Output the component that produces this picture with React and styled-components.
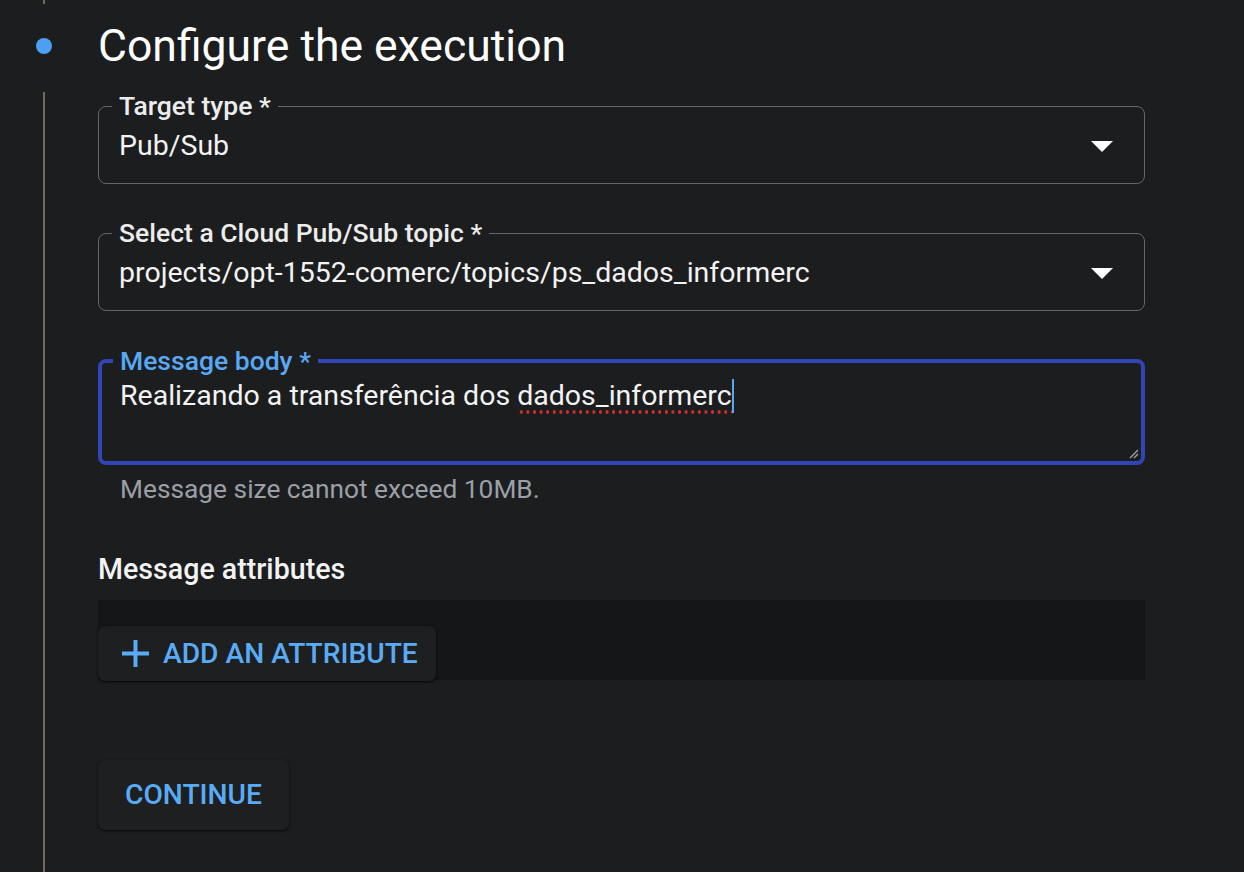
import React from "react";
import styled, { createGlobalStyle } from "styled-components";

const Global = createGlobalStyle`
  html, body { margin: 0; padding: 0; background: #1c1d1f; }
  body { font-family: Roboto, "Noto Sans", "Liberation Sans", sans-serif; color: #f1f3f4; }
  * { box-sizing: border-box; }
`;

const Step = styled.div`
  display: grid;
  grid-template-columns: 88px 1047px;
  column-gap: 10px;
  min-height: 100vh;
`;

const Rail = styled.div`
  display: flex;
  flex-direction: column;
  align-items: center;
`;

const RailLine = styled.div`
  width: 2px;
  background: #71695b;
  height: ${(p) => (p.$grow ? "auto" : p.$h + "px")};
  flex: ${(p) => (p.$grow ? "1" : "none")};
`;

const Dot = styled.div`
  width: 16px;
  height: 16px;
  border-radius: 50%;
  background: #4d9ff2;
  margin: 34px 0 38px;
`;

const Content = styled.div`
  display: flex;
  flex-direction: column;
  padding-top: 20px;
`;

const Title = styled.h2`
  margin: 0 0 19px;
  font-size: 44.5px;
  font-weight: 400;
  line-height: 52px;
  color: #ffffff;
  letter-spacing: 0;
`;

const Outlined = styled.fieldset`
  margin: 0 0 ${(p) => p.$mb || 0}px;
  padding: 0 20px 0;
  border: ${(p) => (p.$focused ? "4px solid #3144b8" : "1.5px solid #63676c")};
  border-radius: 8px;
  min-width: 0;
  position: relative;
  ${(p) => (p.$focused ? "padding-left: 18px; padding-right: 16px;" : "")}
`;

const Legend = styled.legend`
  padding: 0 7px;
  margin-left: -7px;
  font-size: 26.5px;
  font-weight: 500;
  line-height: 30px;
  color: ${(p) => (p.$focused ? "#5aa8f3" : "#ececec")};
`;

const SelectRow = styled.div`
  display: flex;
  align-items: center;
  justify-content: space-between;
  padding: 8px 0 20px;
`;

const Value = styled.span`
  font-size: 28.5px;
  line-height: 34px;
  color: #f3f3f3;
`;

const Caret = styled.svg`
  width: 22px;
  height: 11px;
  margin-right: 11px;
  flex: none;
`;

const BodyText = styled.div`
  font-size: 28.5px;
  line-height: 34px;
  color: #f3f3f3;
  height: 85px;
  padding-top: 3px;
  white-space: nowrap;
`;

const Misspelled = styled.span`
  padding-bottom: 2px;
  background: radial-gradient(circle, #d3302d 1.4px, transparent 1.8px) 1px 100% / 6.6px 3.6px repeat-x;
`;

const Cursor = styled.span`
  display: inline-block;
  width: 2px;
  height: 34px;
  background: #5aa8f3;
  vertical-align: -8px;
`;

const ResizeHandle = styled.svg`
  position: absolute;
  right: 2px;
  bottom: 2px;
  width: 12px;
  height: 12px;
`;

const Helper = styled.div`
  margin: 9px 0 0 22px;
  font-size: 26.3px;
  line-height: 30px;
  color: #9aa0a6;
`;

const SectionLabel = styled.div`
  margin-top: 48px;
  font-size: 28.6px;
  font-weight: 500;
  line-height: 34px;
  color: #f3f3f3;
`;

const AttrPanel = styled.div`
  margin-top: 14px;
  height: 80px;
  background: #151618;
  display: flex;
  align-items: flex-end;
`;

const RaisedButton = styled.button`
  display: inline-flex;
  align-items: center;
  gap: 14px;
  border: none;
  border-radius: 7px;
  background: #1e1f21;
  box-shadow: 0 1px 3px rgba(0, 0, 0, 0.55), 0 1px 1px rgba(0, 0, 0, 0.3);
  color: #5aabf6;
  font-family: Roboto, "Noto Sans", sans-serif;
  font-size: 28.2px;
  font-weight: 500;
  letter-spacing: 0;
  cursor: pointer;
  height: ${(p) => p.$h}px;
  padding: 0 ${(p) => p.$px}px 0 ${(p) => p.$pl}px;
  margin-bottom: ${(p) => p.$mb || 0}px;
`;

const ContinueWrap = styled.div`
  margin-top: 80px;
`;

export default function App() {
  return (
    <>
      <Global />
      <Step>
        <Rail>
          <RailLine $h={4} />
          <Dot />
          <RailLine $grow />
        </Rail>
        <Content>
          <Title>Configure the execution</Title>

          <Outlined $mb={34}>
            <Legend>Target type *</Legend>
            <SelectRow>
              <Value>Pub/Sub</Value>
              <Caret viewBox="0 0 22 11">
                <path d="M0 0 L22 0 L11 11 Z" fill="#ffffff" />
              </Caret>
            </SelectRow>
          </Outlined>

          <Outlined $mb={34.5}>
            <Legend>Select a Cloud Pub/Sub topic *</Legend>
            <SelectRow>
              <Value>projects/opt-1552-comerc/topics/ps_dados_informerc</Value>
              <Caret viewBox="0 0 22 11">
                <path d="M0 0 L22 0 L11 11 Z" fill="#ffffff" />
              </Caret>
            </SelectRow>
          </Outlined>

          <Outlined $focused>
            <Legend $focused>Message body *</Legend>
            <BodyText>
              Realizando a transferência dos <Misspelled>dados_informerc</Misspelled>
              <Cursor />
            </BodyText>
            <ResizeHandle viewBox="0 0 12 12">
              <path d="M11 3 L3 11 M11 7 L7 11" stroke="#9a9a9a" strokeWidth="1.5" />
            </ResizeHandle>
          </Outlined>

          <Helper>Message size cannot exceed 10MB.</Helper>

          <SectionLabel>Message attributes</SectionLabel>
          <AttrPanel>
            <RaisedButton $h={55} $pl={24} $px={18} $mb={-1}>
              <svg width="27" height="27" viewBox="0 0 27 27">
                <path d="M13.5 0 V27 M0 13.5 H27" stroke="#5aabf6" strokeWidth="4" />
              </svg>
              ADD AN ATTRIBUTE
            </RaisedButton>
          </AttrPanel>

          <ContinueWrap>
            <RaisedButton $h={70} $pl={27} $px={27}>
              CONTINUE
            </RaisedButton>
          </ContinueWrap>
        </Content>
      </Step>
    </>
  );
}
